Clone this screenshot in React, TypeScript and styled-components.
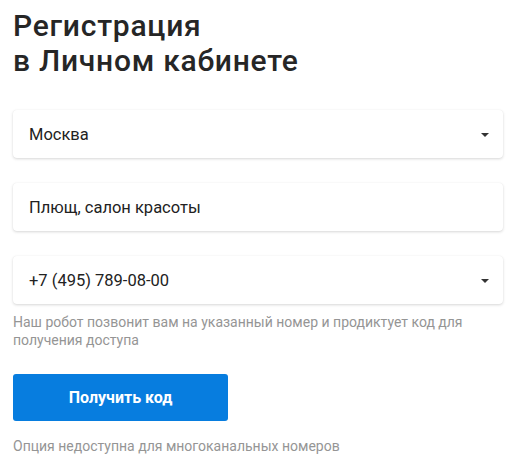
import React from "react";
import styled, { createGlobalStyle } from "styled-components";

const Global = createGlobalStyle`
  html, body { margin: 0; padding: 0; background: #fff; }
  body { font-family: Roboto, "Noto Sans", Arial, sans-serif; color: #222; }
`;

const Page = styled.div`
  padding: 8px 26px 20px 13px;
  display: flex;
  flex-direction: column;
`;

const Title = styled.h1`
  margin: 0 0 32px 0;
  font-size: 30px;
  line-height: 35px;
  font-weight: 500;
  color: #262626;
  letter-spacing: 0.75px;
`;

const Fields = styled.div`
  display: flex;
  flex-direction: column;
  gap: 25px;
`;

const Field = styled.div`
  height: 48px;
  box-sizing: border-box;
  background: #fff;
  border-radius: 4px;
  box-shadow: 0 1px 3px rgba(0, 0, 0, 0.16), 0 0 1px rgba(0, 0, 0, 0.06);
  display: flex;
  align-items: center;
  justify-content: space-between;
  padding: 0 14px 0 16px;
`;

const Value = styled.span`
  font-size: 16.5px;
  color: #222;
`;

const Arrow = styled.span`
  width: 0;
  height: 0;
  border-left: 4px solid transparent;
  border-right: 4px solid transparent;
  border-top: 4px solid #333;
  margin-top: 1px;
`;

const Hint = styled.p`
  margin: 9px 0 0 0;
  font-size: 14px;
  line-height: 18px;
  color: #959595;
  max-width: 470px;
`;

const Button = styled.button`
  margin-top: 25px;
  width: 215px;
  height: 47px;
  border: none;
  border-radius: 3px;
  background: #077ddf;
  color: #fff;
  font-family: Roboto, Arial, sans-serif;
  font-size: 16px;
  font-weight: 700;
  cursor: pointer;
`;

const Note = styled.p`
  margin: 16px 0 0 0;
  font-size: 14px;
  line-height: 18px;
  color: #959595;
`;

export default function App() {
  return (
    <>
      <Global />
      <Page>
        <Title>
          Регистрация
          <br />в Личном кабинете
        </Title>
        <Fields>
          <Field>
            <Value>Москва</Value>
            <Arrow />
          </Field>
          <Field>
            <Value>Плющ, салон красоты</Value>
          </Field>
          <Field>
            <Value>+7 (495) 789-08-00</Value>
            <Arrow />
          </Field>
        </Fields>
        <Hint>
          Наш робот позвонит вам на указанный номер и продиктует код для получения доступа
        </Hint>
        <Button>Получить код</Button>
        <Note>Опция недоступна для многоканальных номеров</Note>
      </Page>
    </>
  );
}
